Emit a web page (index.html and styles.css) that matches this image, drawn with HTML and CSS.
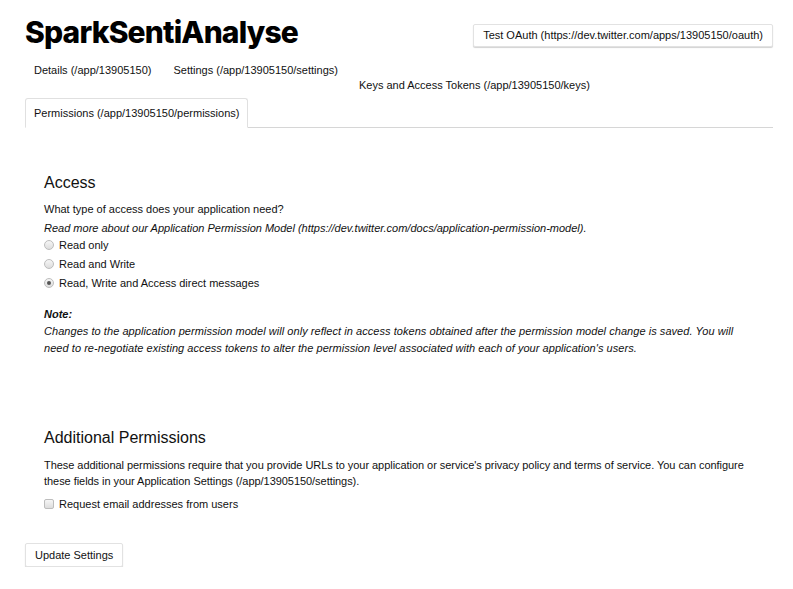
FILE: index.html
```html
<!DOCTYPE html>
<html>
<head>
<meta charset="utf-8">
<title>SparkSentiAnalyse</title>
<link rel="stylesheet" href="styles.css">
</head>
<body>
<div class="page">
  <header class="app-header">
    <h1 class="app-title">SparkSentiAnalyse</h1>
    <button class="btn btn-oauth">Test OAuth (https://dev.twitter.com/apps/13905150/oauth)</button>
  </header>
  <ul class="tabs">
    <li class="tab">Details (/app/13905150)</li>
    <li class="tab">Settings (/app/13905150/settings)</li>
    <li class="tab tab-low">Keys and Access Tokens (/app/13905150/keys)</li>
    <li class="tab tab-active">Permissions (/app/13905150/permissions)</li>
  </ul>
  <form class="settings">
    <section class="block block-access">
      <h2 class="block-title">Access</h2>
      <p class="line">What type of access does your application need?</p>
      <p class="line italic">Read more about our Application Permission Model (https://dev.twitter.com/docs/application-permission-model).</p>
      <label class="option"><span class="radio"></span>Read only</label>
      <label class="option"><span class="radio"></span>Read and Write</label>
      <label class="option"><span class="radio radio-on"></span>Read, Write and Access direct messages</label>
      <p class="note-title">Note:</p>
      <p class="note">Changes to the application permission model will only reflect in access tokens obtained after the permission model change is saved. You will need to re-negotiate existing access tokens to alter the permission level associated with each of your application's users.</p>
    </section>
    <section class="block block-extra">
      <h2 class="block-title">Additional Permissions</h2>
      <p class="para">These additional permissions require that you provide URLs to your application or service's privacy policy and terms of service. You can configure these fields in your Application Settings (/app/13905150/settings).</p>
      <label class="option"><span class="check"></span>Request email addresses from users</label>
    </section>
    <button class="btn btn-update" type="button">Update Settings</button>
  </form>
</div>
</body>
</html>
```
FILE: styles.css
```css
* { box-sizing: border-box; }
html, body { margin: 0; padding: 0; background: #fff; }
body {
  font-family: "Liberation Sans", Arial, sans-serif;
  font-size: 11px;
  color: #111;
}
.page { padding: 0 20px 0 25px; }

.app-header {
  display: flex;
  justify-content: space-between;
  align-items: flex-start;
  padding-top: 14px;
}
.app-title {
  margin: 0;
  font-family: Inter, "Liberation Sans", sans-serif;
  font-weight: 800;
  font-size: 30px;
  line-height: 36px;
  letter-spacing: -0.82px;
  color: #000;
}
.btn {
  font-family: "Liberation Sans", Arial, sans-serif;
  font-size: 11px;
  color: #111;
  background: #fff;
  border: 1px solid #e2e2e2;
  border-radius: 2px;
  box-shadow: 0 1px 1px rgba(0,0,0,0.18);
  padding: 0 9px;
  height: 23px;
  line-height: 21px;
  cursor: pointer;
}
.btn-oauth { margin-top: 10px; }

.tabs {
  list-style: none;
  margin: 12px 0 0;
  padding: 0;
  display: flex;
  flex-wrap: wrap;
  align-items: flex-start;
  border-bottom: 1px solid #d6d6d6;
}
.tab {
  padding: 0 8px;
  border: 1px solid transparent;
  margin-right: 4px;
  line-height: 14px;
  height: 21px;
}
.tab-low { margin-top: 15px; height: 21px; margin-left: -1px; }
.tab-active {
  border-color: #e0e0e0;
  border-bottom-color: #fff;
  border-radius: 3px 3px 0 0;
  padding-top: 7px;
  height: 30px;
  margin-bottom: -1px;
  margin-left: 0;
  background: #fff;
}

.settings { padding-top: 46px; }
.block { padding: 0 19px; }
.block-title {
  margin: 0 0 10px;
  font-size: 16px;
  font-weight: 400;
  line-height: 18px;
  color: #111;
}
.line { margin: 0 0 5px; line-height: 14px; }
.line.italic { margin-bottom: 0; }
.italic { font-style: italic; }
.option {
  display: flex;
  align-items: center;
  height: 19px;
  line-height: 14px;
}
.radio, .check {
  width: 10px;
  height: 10px;
  margin-right: 5px;
  border: 1px solid #bdbdbd;
  background: linear-gradient(#f6f6f6, #dddddd);
  flex: none;
  display: inline-block;
}
.radio { border-radius: 50%; position: relative; }
.radio-on::after {
  content: "";
  position: absolute;
  left: 2px; top: 2px;
  width: 4px; height: 4px;
  border-radius: 50%;
  background: #555;
}
.check { border-radius: 2px; }
.note-title { margin: 15px 0 2px; font-weight: 700; font-style: italic; line-height: 14px; }
.note { margin: 0; font-style: italic; line-height: 17px; letter-spacing: 0.05px; }
.block-extra { margin-top: 72px; }
.para { margin: 0 0 5px; line-height: 16px; letter-spacing: -0.05px; }
.btn-update { margin-top: 30px; height: 24px; padding: 0 9px; }
```
